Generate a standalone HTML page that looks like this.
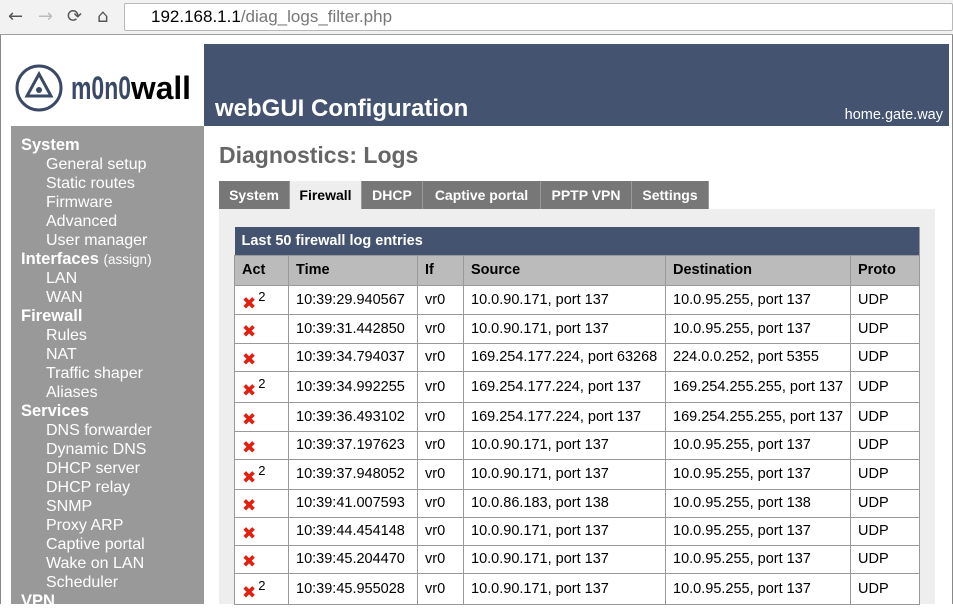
<!DOCTYPE html>
<html><head><meta charset="utf-8"><style>
*{margin:0;padding:0;box-sizing:border-box}
body{width:953px;height:604px;overflow:hidden;background:#fff;font-family:"Liberation Sans",sans-serif;position:relative}
#chrome{position:absolute;left:0;top:0;width:953px;height:35px;background:#f2f2f2;border-bottom:1px solid #a0a0a0}
#url{position:absolute;left:124px;top:3px;width:829px;height:28px;background:#fff;border:1px solid #b8b8b8;border-radius:2px;font-size:17px;line-height:26px;padding-left:26px;color:#000}
#url span{color:#777}
.ic{position:absolute;top:6px;font-size:18px;color:#555;font-family:"DejaVu Sans",sans-serif}
#frame{position:absolute;left:0;top:35px;width:953px;height:569px;border-left:1px solid #888;border-right:1px solid #888}
#hdr{position:absolute;left:204px;top:44px;width:745px;height:82px;background:#435370}
#hdr .t{position:absolute;left:11px;bottom:3px;color:#fff;font-weight:bold;font-size:24px}
#hdr .h{position:absolute;right:6px;bottom:3px;color:#fff;font-size:14.5px}
#side{position:absolute;left:11px;top:126px;width:193px;height:478px;background:#999;color:#fff;padding:10px 0 0 10px;font-size:16px;line-height:19px}
#side b{display:block;font-size:16.5px}
#side b small{font-weight:normal;font-size:13.5px}
#side div{padding-left:25px}
#title{position:absolute;left:219px;top:142px;font-size:23px;font-weight:bold;color:#666}
#tabs{position:absolute;left:219px;top:181px;height:28px;display:flex}
#tabs div{background:#777;color:#fff;font-weight:bold;font-size:14px;line-height:28px;text-align:center;border-right:1px solid #999}
#tabs div.a{background:#eee;color:#000}
#panel{position:absolute;left:219px;top:209px;width:716px;height:395px;background:#eee}
table{position:absolute;left:234px;top:227px;width:685px;border-collapse:collapse;font-size:14.5px;table-layout:fixed}
td,th{border:1px solid #999;padding:0 7px;text-align:left;white-space:nowrap;overflow:hidden;background:#fff}
th{background:#bbb;font-weight:bold;height:30px}
.cap td{background:#435370;color:#fff;font-weight:bold;height:28px;border:none;border-right:1px solid #999}
.x{color:#e02010;font-weight:bold;font-size:17px;font-family:"DejaVu Sans",sans-serif;position:relative;top:3px}
sup{font-size:13px;vertical-align:5px;margin-left:2px}
</style></head><body>
<div id="chrome">
<span class="ic" style="left:8px">&#8592;</span>
<span class="ic" style="left:38px;color:#bbb">&#8594;</span>
<span class="ic" style="left:67px">&#10227;</span>
<span class="ic" style="left:97px">&#8962;</span>
<div id="url">192.168.1.1<span>/diag_logs_filter.php</span></div>
</div>
<div id="frame"></div>
<svg style="position:absolute;left:14px;top:62px" width="190" height="52">
<circle cx="25" cy="26" r="22" fill="none" stroke="#3a4a66" stroke-width="3"/>
<path d="M25 12 L37 34 L13 34 Z" fill="none" stroke="#3a4a66" stroke-width="3"/>
<circle cx="25" cy="28" r="3" fill="#3a4a66"/>
<text x="57" y="37" font-family="Liberation Sans,sans-serif" font-weight="bold" font-size="32" fill="#3a4a66" textLength="60" lengthAdjust="spacingAndGlyphs">m0n0</text>
<text x="117" y="37" font-family="Liberation Sans,sans-serif" font-weight="bold" font-size="32" fill="#000" textLength="60" lengthAdjust="spacingAndGlyphs">wall</text>
</svg>
<div id="hdr"><div class="t">webGUI Configuration</div><div class="h">home.gate.way</div></div>
<div id="side">
<b>System</b><div>General setup</div><div>Static routes</div><div>Firmware</div><div>Advanced</div><div>User manager</div>
<b>Interfaces <small>(assign)</small></b><div>LAN</div><div>WAN</div>
<b>Firewall</b><div>Rules</div><div>NAT</div><div>Traffic shaper</div><div>Aliases</div>
<b>Services</b><div>DNS forwarder</div><div>Dynamic DNS</div><div>DHCP server</div><div>DHCP relay</div><div>SNMP</div><div>Proxy ARP</div><div>Captive portal</div><div>Wake on LAN</div><div>Scheduler</div>
<b>VPN</b>
</div>
<div id="title">Diagnostics: Logs</div>
<div id="tabs"><div style="width:71px">System</div><div class="a" style="width:72px">Firewall</div><div style="width:61px">DHCP</div><div style="width:118px">Captive portal</div><div style="width:91px">PPTP VPN</div><div style="width:77px">Settings</div></div>
<div id="panel"></div>
<table>
<colgroup><col style="width:54px"><col style="width:129px"><col style="width:46px"><col style="width:202px"><col style="width:185px"><col style="width:69px"></colgroup>
<tr class="cap"><td colspan="6">Last 50 firewall log entries</td></tr>
<tr><th>Act</th><th>Time</th><th>If</th><th>Source</th><th>Destination</th><th>Proto</th></tr>
<tr style="height:29px"><td><span class="x">✖</span><sup>2</sup></td><td>10:39:29.940567</td><td>vr0</td><td>10.0.90.171, port 137</td><td>10.0.95.255, port 137</td><td>UDP</td></tr>
<tr style="height:29px"><td><span class="x">✖</span></td><td>10:39:31.442850</td><td>vr0</td><td>10.0.90.171, port 137</td><td>10.0.95.255, port 137</td><td>UDP</td></tr>
<tr style="height:28px"><td><span class="x">✖</span></td><td>10:39:34.794037</td><td>vr0</td><td>169.254.177.224, port 63268</td><td>224.0.0.252, port 5355</td><td>UDP</td></tr>
<tr style="height:31px"><td><span class="x">✖</span><sup>2</sup></td><td>10:39:34.992255</td><td>vr0</td><td>169.254.177.224, port 137</td><td>169.254.255.255, port 137</td><td>UDP</td></tr>
<tr style="height:29px"><td><span class="x">✖</span></td><td>10:39:36.493102</td><td>vr0</td><td>169.254.177.224, port 137</td><td>169.254.255.255, port 137</td><td>UDP</td></tr>
<tr style="height:28px"><td><span class="x">✖</span></td><td>10:39:37.197623</td><td>vr0</td><td>10.0.90.171, port 137</td><td>10.0.95.255, port 137</td><td>UDP</td></tr>
<tr style="height:30px"><td><span class="x">✖</span><sup>2</sup></td><td>10:39:37.948052</td><td>vr0</td><td>10.0.90.171, port 137</td><td>10.0.95.255, port 137</td><td>UDP</td></tr>
<tr style="height:28px"><td><span class="x">✖</span></td><td>10:39:41.007593</td><td>vr0</td><td>10.0.86.183, port 138</td><td>10.0.95.255, port 138</td><td>UDP</td></tr>
<tr style="height:28px"><td><span class="x">✖</span></td><td>10:39:44.454148</td><td>vr0</td><td>10.0.90.171, port 137</td><td>10.0.95.255, port 137</td><td>UDP</td></tr>
<tr style="height:28px"><td><span class="x">✖</span></td><td>10:39:45.204470</td><td>vr0</td><td>10.0.90.171, port 137</td><td>10.0.95.255, port 137</td><td>UDP</td></tr>
<tr style="height:31px"><td><span class="x">✖</span><sup>2</sup></td><td>10:39:45.955028</td><td>vr0</td><td>10.0.90.171, port 137</td><td>10.0.95.255, port 137</td><td>UDP</td></tr>
</table>
</body></html>
